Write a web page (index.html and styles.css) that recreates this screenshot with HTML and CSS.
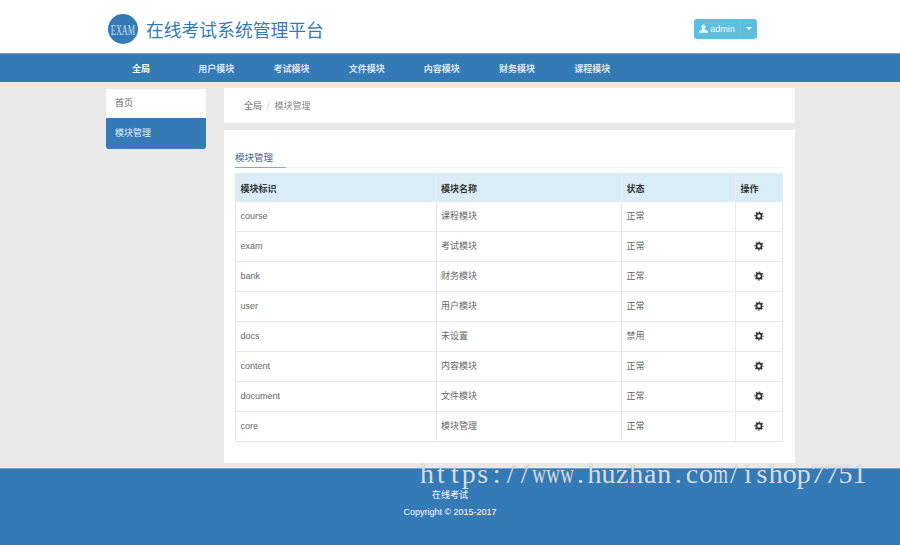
FILE: index.html
```html
<!DOCTYPE html>
<html lang="en">
<head>
    <meta charset="UTF-8">
    <meta name="viewport" content="width=device-width, initial-scale=1.0">
    <title>在线考试系统管理平台</title>
    <link rel="stylesheet" href="styles.css">
</head>
<body>
    <svg class="icon-defs" width="0" height="0">
        <symbol id="cog" viewBox="0 0 12 12">
            <circle cx="6" cy="6" r="3.1" fill="none" stroke="currentColor" stroke-width="2"></circle>
            <circle cx="6" cy="6" r="4.7" fill="none" stroke="currentColor" stroke-width="1.6" stroke-dasharray="1.85 1.84" stroke-dashoffset="0.92"></circle>
        </symbol>
    </svg>

    <header class="site-head">
        <div class="brand">
            <svg class="brand-logo" width="30" height="30" viewBox="0 0 30 30">
                <circle cx="15" cy="15" r="15" fill="#337ab7"></circle>
                <text transform="translate(15 20.500) scale(0.55 1)" text-anchor="middle" font-family="Liberation Serif, serif" font-size="15" fill="#cfe0ef">EXAM</text>
            </svg>
            <span class="brand-name">在线考试系统管理平台</span>
        </div>
        <div class="user-btn">
            <span class="user-main">
                <svg width="9" height="9" viewBox="0 0 12 12"><path fill="currentColor" d="M6 0.5c1.7 0 2.7 1.3 2.7 3 0 1.2-.5 2.2-1.2 2.8v1l3.5 1.5c.6.3 1 .7 1 1.3v1.4H0v-1.4c0-.6.4-1 1-1.3l3.500-1.500v-1C3.800 5.700 3.300 4.700 3.300 3.500c0-1.700 1-3 2.700-3z"></path></svg>
                admin
            </span>
            <span class="user-caret"><i></i></span>
        </div>
    </header>

    <nav class="main-nav">
        <a href="#" class="nav-item active">全局</a>
        <a href="#" class="nav-item">用户模块</a>
        <a href="#" class="nav-item">考试模块</a>
        <a href="#" class="nav-item">文件模块</a>
        <a href="#" class="nav-item">内容模块</a>
        <a href="#" class="nav-item">财务模块</a>
        <a href="#" class="nav-item">课程模块</a>
    </nav>

    <div class="page-body">
        <aside class="side-menu">
            <a href="#" class="side-item">首页</a>
            <a href="#" class="side-item active">模块管理</a>
        </aside>

        <main class="content">
            <div class="crumbs">
                <span>全局</span>
                <span class="crumb-sep">/</span>
                <span class="crumb-now">模块管理</span>
            </div>

            <section class="panel">
                <h2 class="panel-title"><span>模块管理</span></h2>
                <table class="module-table">
                    <colgroup>
                        <col class="col-id">
                        <col class="col-name">
                        <col class="col-state">
                        <col class="col-op">
                    </colgroup>
                    <thead>
                        <tr><th>模块标识</th><th>模块名称</th><th>状态</th><th>操作</th></tr>
                    </thead>
                    <tbody>
                        <tr><td>course</td><td>课程模块</td><td>正常</td><td class="op"><svg class="cog"><use href="#cog"></use></svg></td></tr>
                        <tr><td>exam</td><td>考试模块</td><td>正常</td><td class="op"><svg class="cog"><use href="#cog"></use></svg></td></tr>
                        <tr><td>bank</td><td>财务模块</td><td>正常</td><td class="op"><svg class="cog"><use href="#cog"></use></svg></td></tr>
                        <tr><td>user</td><td>用户模块</td><td>正常</td><td class="op"><svg class="cog"><use href="#cog"></use></svg></td></tr>
                        <tr><td>docs</td><td>未设置</td><td>禁用</td><td class="op"><svg class="cog"><use href="#cog"></use></svg></td></tr>
                        <tr><td>content</td><td>内容模块</td><td>正常</td><td class="op"><svg class="cog"><use href="#cog"></use></svg></td></tr>
                        <tr><td>document</td><td>文件模块</td><td>正常</td><td class="op"><svg class="cog"><use href="#cog"></use></svg></td></tr>
                        <tr><td>core</td><td>模块管理</td><td>正常</td><td class="op"><svg class="cog"><use href="#cog"></use></svg></td></tr>
                    </tbody>
                </table>
            </section>
        </main>
    </div>

    <footer class="site-foot">
        <p>在线考试</p>
        <p>Copyright © 2015-2017</p>
    </footer>

    <div class="watermark"><span>h</span><span>t</span><span>t</span><span>p</span><span>s</span><span>:</span><span>/</span><span>/</span><span class="wide">w</span><span class="wide">w</span><span class="wide">w</span><span>.</span><span>h</span><span>u</span><span>z</span><span>h</span><span>a</span><span>n</span><span>.</span><span>c</span><span>o</span><span class="wide">m</span><span>/</span><span>i</span><span>s</span><span>h</span><span>o</span><span>p</span><span>7</span><span>7</span><span>5</span><span>1</span></div>
</body>
</html>
```

FILE: styles.css
```css
* {
    box-sizing: border-box;
}

html, body {
    height: 100%;
}

body {
    margin: 0;
    position: relative;
    display: flex;
    flex-direction: column;
    overflow: hidden;
    background-color: #e9e9e9;
    font-family: "Liberation Sans", "Noto Sans CJK SC", sans-serif;
    font-size: 9px;
    color: #666;
}

a {
    text-decoration: none;
}

.icon-defs {
    position: absolute;
}

/* Header */
.site-head {
    height: 53px;
    flex: none;
    display: flex;
    align-items: center;
    justify-content: space-between;
    padding: 5px 143px 0 108px;
    background-color: #fff;
}

.brand {
    display: flex;
    align-items: center;
    gap: 8px;
    margin-top: -1px;
}

.brand-logo {
    display: block;
}

.brand-name {
    font-size: 17.800px;
    color: #337ab7;
}

.user-btn {
    display: flex;
    height: 20px;
    width: 63px;
    margin-top: -1px;
    border-radius: 3px;
    background-color: #5bc0de;
    color: #f2fafd;
}

.user-main {
    width: 47px;
    display: flex;
    align-items: center;
    justify-content: center;
    gap: 2px;
    border-right: 1px solid #66c4e0;
}

.user-caret {
    flex: 1;
    display: flex;
    align-items: center;
    justify-content: center;
}

.user-caret i {
    border-top: 3px solid #fff;
    border-left: 3px solid transparent;
    border-right: 3px solid transparent;
}

/* Nav */
.main-nav {
    height: 29px;
    flex: none;
    display: flex;
    align-items: center;
    padding-left: 103.500px;
    border-top: 1px solid #6fa3cf;
    background-color: #337ab7;
}

.nav-item {
    width: 75.200px;
    text-align: center;
    font-weight: bold;
    color: #dbe7f2;
}

.nav-item.active {
    color: #fff;
}

/* Body */
.page-body {
    flex: 1;
    display: flex;
    align-items: flex-start;
    gap: 18px;
    padding: 6px 106px 0;
}

.side-menu {
    width: 100px;
    flex: none;
    margin-top: 1px;
    display: flex;
    flex-direction: column;
}

.side-item {
    height: 29px;
    line-height: 28px;
    padding-left: 9px;
    background-color: #fff;
    color: #666;
}

.side-item.active {
    height: 31px;
    line-height: 31px;
    border-radius: 0 0 3px 3px;
    background-color: #337ab7;
    color: #e6eff7;
}

.content {
    flex: 1;
    display: flex;
    flex-direction: column;
    gap: 7px;
}

.crumbs {
    height: 35px;
    display: flex;
    align-items: center;
    gap: 5px;
    padding-left: 20px;
    background-color: #fff;
    color: #666;
}

.crumb-sep {
    color: #ccc;
}

.crumb-now {
    color: #888;
}

.panel {
    height: 333px;
    padding: 21px 12px 0 11px;
    background-color: #fff;
}

.panel-title {
    height: 17px;
    margin: 0 0 5px;
    border-bottom: 1px solid #f2f2f2;
    font-size: 9.500px;
    font-weight: normal;
    color: #3b6a96;
}

.panel-title span {
    display: inline-block;
    width: 51px;
    height: 17px;
    line-height: 13px;
    border-bottom: 1px solid #8ca9c4;
}

/* Table */
.module-table {
    width: 547px;
    table-layout: fixed;
    border-collapse: collapse;
}

.col-id {
    width: 200.500px;
}

.col-name {
    width: 185.500px;
}

.col-state {
    width: 114px;
}

.col-op {
    width: 47px;
}

.module-table th,
.module-table td {
    padding: 0 0 2px 4.500px;
    border: 1px solid #e8e8e8;
    text-align: left;
}

.module-table th {
    height: 28px;
    padding: 1px 0 0 4.500px;
    border-color: #d9edf7;
    border-right-color: #e6f2f8;
    background-color: #d9edf7;
    font-weight: bold;
    color: #333;
}

.module-table td {
    height: 30px;
}

.module-table td.op {
    padding: 0 0 2px;
    text-align: center;
    color: #333;
}

.cog {
    display: block;
    width: 10px;
    height: 10px;
    margin: 0 auto;
}

/* Footer */
.site-foot {
    height: 77px;
    flex: none;
    padding-top: 21px;
    border-top: 1px solid #6fa3cf;
    background-color: #337ab7;
    text-align: center;
    color: #fff;
}

.site-foot p {
    margin: 0 0 6px;
    line-height: 11px;
}

/* Image host's stamp lies over the page */
.watermark {
    position: absolute;
    left: 420px;
    top: 458px;
    font-family: "Liberation Serif", serif;
    font-size: 28px;
    line-height: 32px;
    white-space: nowrap;
    color: rgba(235, 240, 245, 0.85);
    text-shadow: 0 0 1px rgba(110, 120, 130, 0.7);
}

.watermark span {
    display: inline-block;
    width: 13.960px;
    text-align: center;
}

.watermark .wide {
    transform: scaleX(0.68);
    text-indent: -3px;
}
```
